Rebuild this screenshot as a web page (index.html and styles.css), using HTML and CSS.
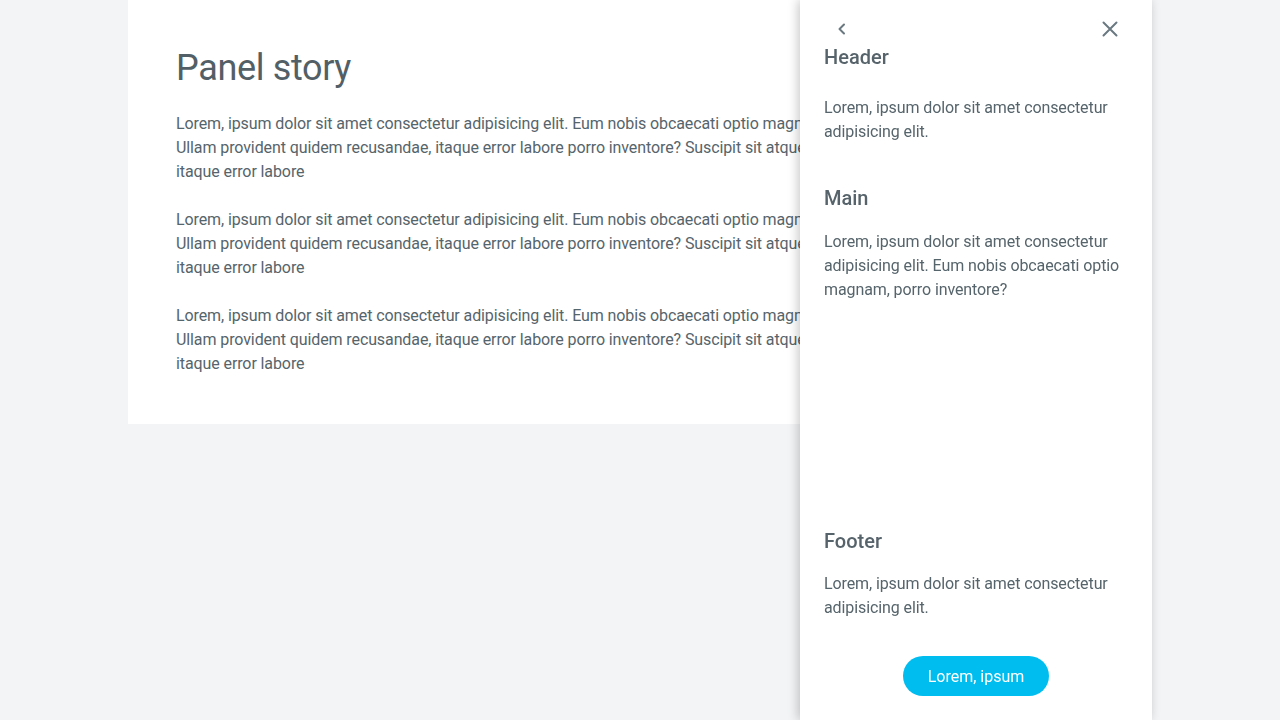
FILE: index.html
```html
<!DOCTYPE html>
<html lang="en">
<head>
<meta charset="utf-8">
<title>Panel story</title>
<link rel="stylesheet" href="styles.css">
</head>
<body>
<main class="card">
  <h1 class="title">Panel story</h1>
  <p class="text">Lorem, ipsum dolor sit amet consectetur adipisicing elit. Eum nobis obcaecati optio magnam, porro inventore?<br>Ullam provident quidem recusandae, itaque error labore porro inventore? Suscipit sit atque quidem recusandae,<br>itaque error labore</p>
  <p class="text">Lorem, ipsum dolor sit amet consectetur adipisicing elit. Eum nobis obcaecati optio magnam, porro inventore?<br>Ullam provident quidem recusandae, itaque error labore porro inventore? Suscipit sit atque quidem recusandae,<br>itaque error labore</p>
  <p class="text">Lorem, ipsum dolor sit amet consectetur adipisicing elit. Eum nobis obcaecati optio magnam, porro inventore?<br>Ullam provident quidem recusandae, itaque error labore porro inventore? Suscipit sit atque quidem recusandae,<br>itaque error labore</p>
</main>
<aside class="panel">
  <div class="panel-head">
    <div class="panel-icons">
      <button class="icon-btn" aria-label="Back">
        <svg width="24" height="24" viewBox="0 0 24 24"><path d="M14 7.5 9.5 12 14 16.5" fill="none" stroke="#6a7880" stroke-width="2" stroke-linecap="round" stroke-linejoin="round"/></svg>
      </button>
      <button class="icon-btn" aria-label="Close">
        <svg width="24" height="24" viewBox="0 0 24 24"><path d="M5.5 5.5 18.5 18.5M18.5 5.5 5.5 18.5" fill="none" stroke="#6a7880" stroke-width="2" stroke-linecap="round"/></svg>
      </button>
    </div>
    <h2 class="panel-title">Header</h2>
    <p class="panel-text head-text">Lorem, ipsum dolor sit amet consectetur adipisicing elit.</p>
  </div>
  <div class="panel-main">
    <h2 class="panel-title">Main</h2>
    <p class="panel-text main-text">Lorem, ipsum dolor sit amet consectetur adipisicing elit. Eum nobis obcaecati optio magnam, porro inventore?</p>
  </div>
  <div class="panel-foot">
    <h2 class="panel-title">Footer</h2>
    <p class="panel-text foot-text">Lorem, ipsum dolor sit amet consectetur adipisicing elit.</p>
    <div class="actions"><button class="primary">Lorem, ipsum</button></div>
  </div>
</aside>
</body>
</html>
```
FILE: styles.css
```css
* { box-sizing: border-box; }
html, body { height: 100%; }
body {
  margin: 0;
  background: #f3f4f6;
  font-family: Roboto, "Liberation Sans", sans-serif;
  color: #56646b;
  overflow: hidden;
}
.card {
  width: 1024px;
  margin: 0 auto;
  background: #fff;
  padding: 48px 48px 48px;
}
.title {
  margin: 0 0 24px;
  font-size: 36px;
  line-height: 40px;
  font-weight: 400;
  letter-spacing: -0.35px;
  color: #535f66;
}
.text {
  margin: 0 0 24px;
  font-size: 16px;
  line-height: 24px;
  letter-spacing: -0.1px;
  white-space: nowrap;
  overflow: hidden;
}
.text:last-child { margin-bottom: 0; }
.panel {
  position: fixed;
  top: 0;
  left: 800px;
  width: 352px;
  height: 720px;
  background: #fff;
  box-shadow: -2px 0 10px rgba(0,0,0,0.22);
  display: flex;
  flex-direction: column;
  padding: 17px 24px 24px;
}
.panel-icons {
  display: flex;
  justify-content: space-between;
  height: 24px;
  margin: 0 6px 0 6px;
}
.icon-btn {
  border: 0;
  background: none;
  padding: 0;
  width: 24px;
  height: 24px;
  display: flex;
  cursor: pointer;
}
.panel-title {
  margin: 2px 0 0;
  font-size: 20px;
  line-height: 28px;
  font-weight: 500;
  color: #56636a;
}
.panel-text {
  margin: 0;
  font-size: 16px;
  line-height: 24px;
  letter-spacing: -0.1px;
}
.head-text { margin-top: 25px; }
.panel-main { margin-top: 38px; flex: 1; }
.main-text { margin-top: 18px; }
.foot-text { margin-top: 17px; }
.actions {
  display: flex;
  justify-content: center;
  margin-top: 36px;
}
.primary {
  height: 40px;
  padding: 0 25px;
  border: 0;
  border-radius: 20px;
  background: #00bdf0;
  color: #fff;
  font-family: Roboto, "Liberation Sans", sans-serif;
  font-size: 16px;
  cursor: pointer;
}
```
